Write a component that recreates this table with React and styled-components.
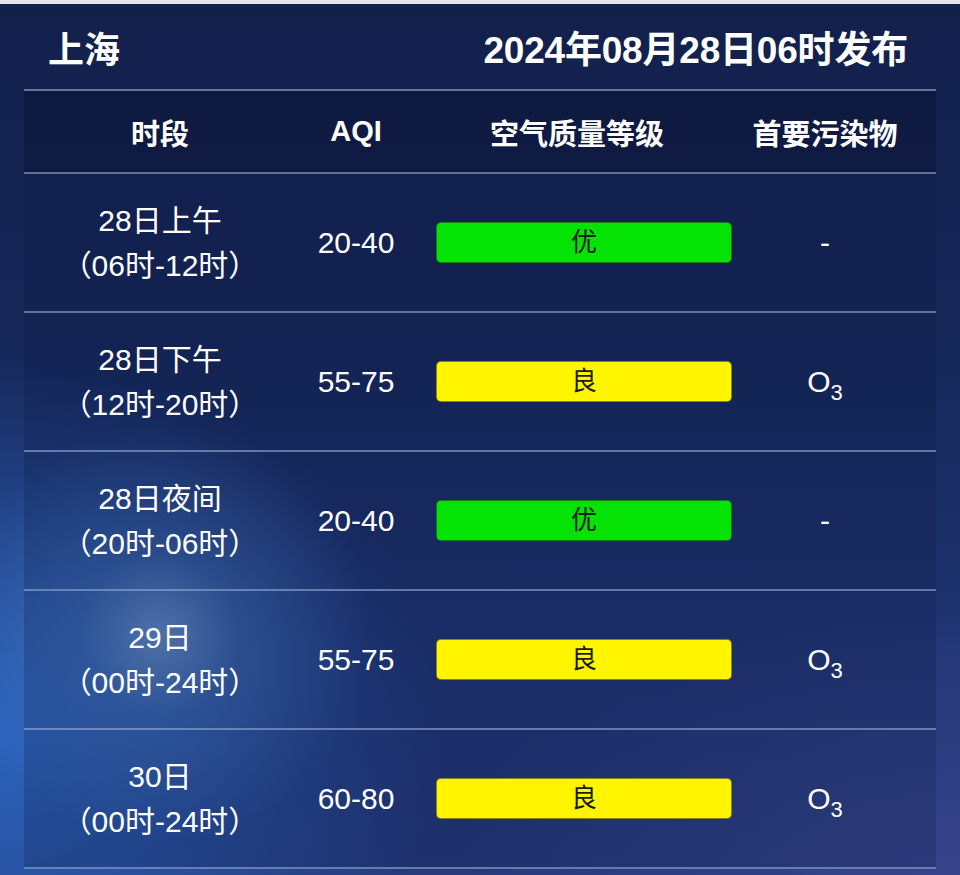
import React from "react";
import styled, { createGlobalStyle } from "styled-components";

const GlobalStyle = createGlobalStyle`
  html, body {
    margin: 0;
    padding: 0;
    background: #13204c;
  }
  * {
    box-sizing: border-box;
  }
`;

const FONT = `"Liberation Sans", "Noto Sans CJK SC", sans-serif`;

const rows = [
  { day: "28日上午", span: "（06时-12时）", aqi: "20-40", level: "优", pollutant: null },
  { day: "28日下午", span: "（12时-20时）", aqi: "55-75", level: "良", pollutant: "O3" },
  { day: "28日夜间", span: "（20时-06时）", aqi: "20-40", level: "优", pollutant: null },
  { day: "29日", span: "（00时-24时）", aqi: "55-75", level: "良", pollutant: "O3" },
  { day: "30日", span: "（00时-24时）", aqi: "60-80", level: "良", pollutant: "O3" },
];

const levelColors = {
  优: "#05e305",
  良: "#fff500",
};

const Page = styled.div`
  width: 960px;
  height: 875px;
  overflow: hidden;
  border-top: 4px solid #e4e5ea;
  font-family: ${FONT};
  color: #fff;
  background:
    radial-gradient(circle at 160px 630px, rgba(150, 190, 235, 0.55) 0px, rgba(90, 140, 210, 0.32) 80px, rgba(40, 90, 180, 0) 210px),
    radial-gradient(ellipse 440px 380px at 0px 730px, rgba(45, 110, 205, 0.8), rgba(45, 110, 205, 0)),
    radial-gradient(ellipse 500px 300px at 960px 875px, rgba(70, 75, 150, 0.55), rgba(70, 75, 150, 0)),
    linear-gradient(180deg, #13204c 0%, #162759 40%, #1f3472 75%, #263a7c 100%);
`;

const Header = styled.header`
  height: 85px;
  display: flex;
  align-items: center;
  justify-content: space-between;
  padding: 0 52px 0 48px;
  font-weight: 700;
`;

const City = styled.h1`
  margin: 0;
  font-size: 36px;
  font-weight: 700;
`;

const Issued = styled.div`
  font-size: 37px;
  font-weight: 700;
  letter-spacing: -0.2px;
`;

const Table = styled.div`
  margin: 0 24px;
  border-top: 2px solid rgba(150, 170, 215, 0.6);
`;

const Row = styled.div`
  display: grid;
  grid-template-columns: 272px 120px 336px 1fr;
  padding-right: 38px;
  height: ${(p) => (p.$head ? "83px" : "139px")};
  border-bottom: 2px solid rgba(150, 170, 215, 0.6);
  background: ${(p) => (p.$head ? "rgba(8, 14, 42, 0.38)" : "rgba(10, 22, 62, 0.22)")};
`;

const HeadCell = styled.div`
  display: flex;
  align-items: center;
  justify-content: center;
  white-space: nowrap;
  font-size: 29px;
  font-weight: 700;
  padding-right: ${(p) => p.$shift || 0}px;
`;

const Cell = styled.div`
  display: flex;
  flex-direction: column;
  align-items: center;
  justify-content: center;
  font-size: 30px;
  line-height: 45px;
  white-space: nowrap;
  padding: ${(p) => (p.$pad ? "0 20px" : "0")};
`;

const Badge = styled.div`
  width: 100%;
  height: 41px;
  border-radius: 5px;
  border: 1px solid rgba(40, 40, 30, 0.55);
  background: ${(p) => p.$color};
  color: #1b1b1b;
  font-size: 26px;
  font-weight: 400;
  display: flex;
  align-items: center;
  justify-content: center;
`;

const Sub = styled.sub`
  font-size: 22px;
  vertical-align: -8px;
  line-height: 0;
`;

function Pollutant({ value }) {
  if (!value) return <span>-</span>;
  return (
    <span>
      O<Sub>3</Sub>
    </span>
  );
}

export default function App() {
  return (
    <>
      <GlobalStyle />
      <Page>
        <Header>
          <City>上海</City>
          <Issued>2024年08月28日06时发布</Issued>
        </Header>
        <Table>
          <Row $head>
            <HeadCell>时段</HeadCell>
            <HeadCell>AQI</HeadCell>
            <HeadCell $shift={14}>空气质量等级</HeadCell>
            <HeadCell>首要污染物</HeadCell>
          </Row>
          {rows.map((r, i) => (
            <Row key={i}>
              <Cell>
                <span>{r.day}</span>
                <span>{r.span}</span>
              </Cell>
              <Cell>{r.aqi}</Cell>
              <Cell $pad>
                <Badge $color={levelColors[r.level]}>{r.level}</Badge>
              </Cell>
              <Cell>
                <Pollutant value={r.pollutant} />
              </Cell>
            </Row>
          ))}
        </Table>
      </Page>
    </>
  );
}
